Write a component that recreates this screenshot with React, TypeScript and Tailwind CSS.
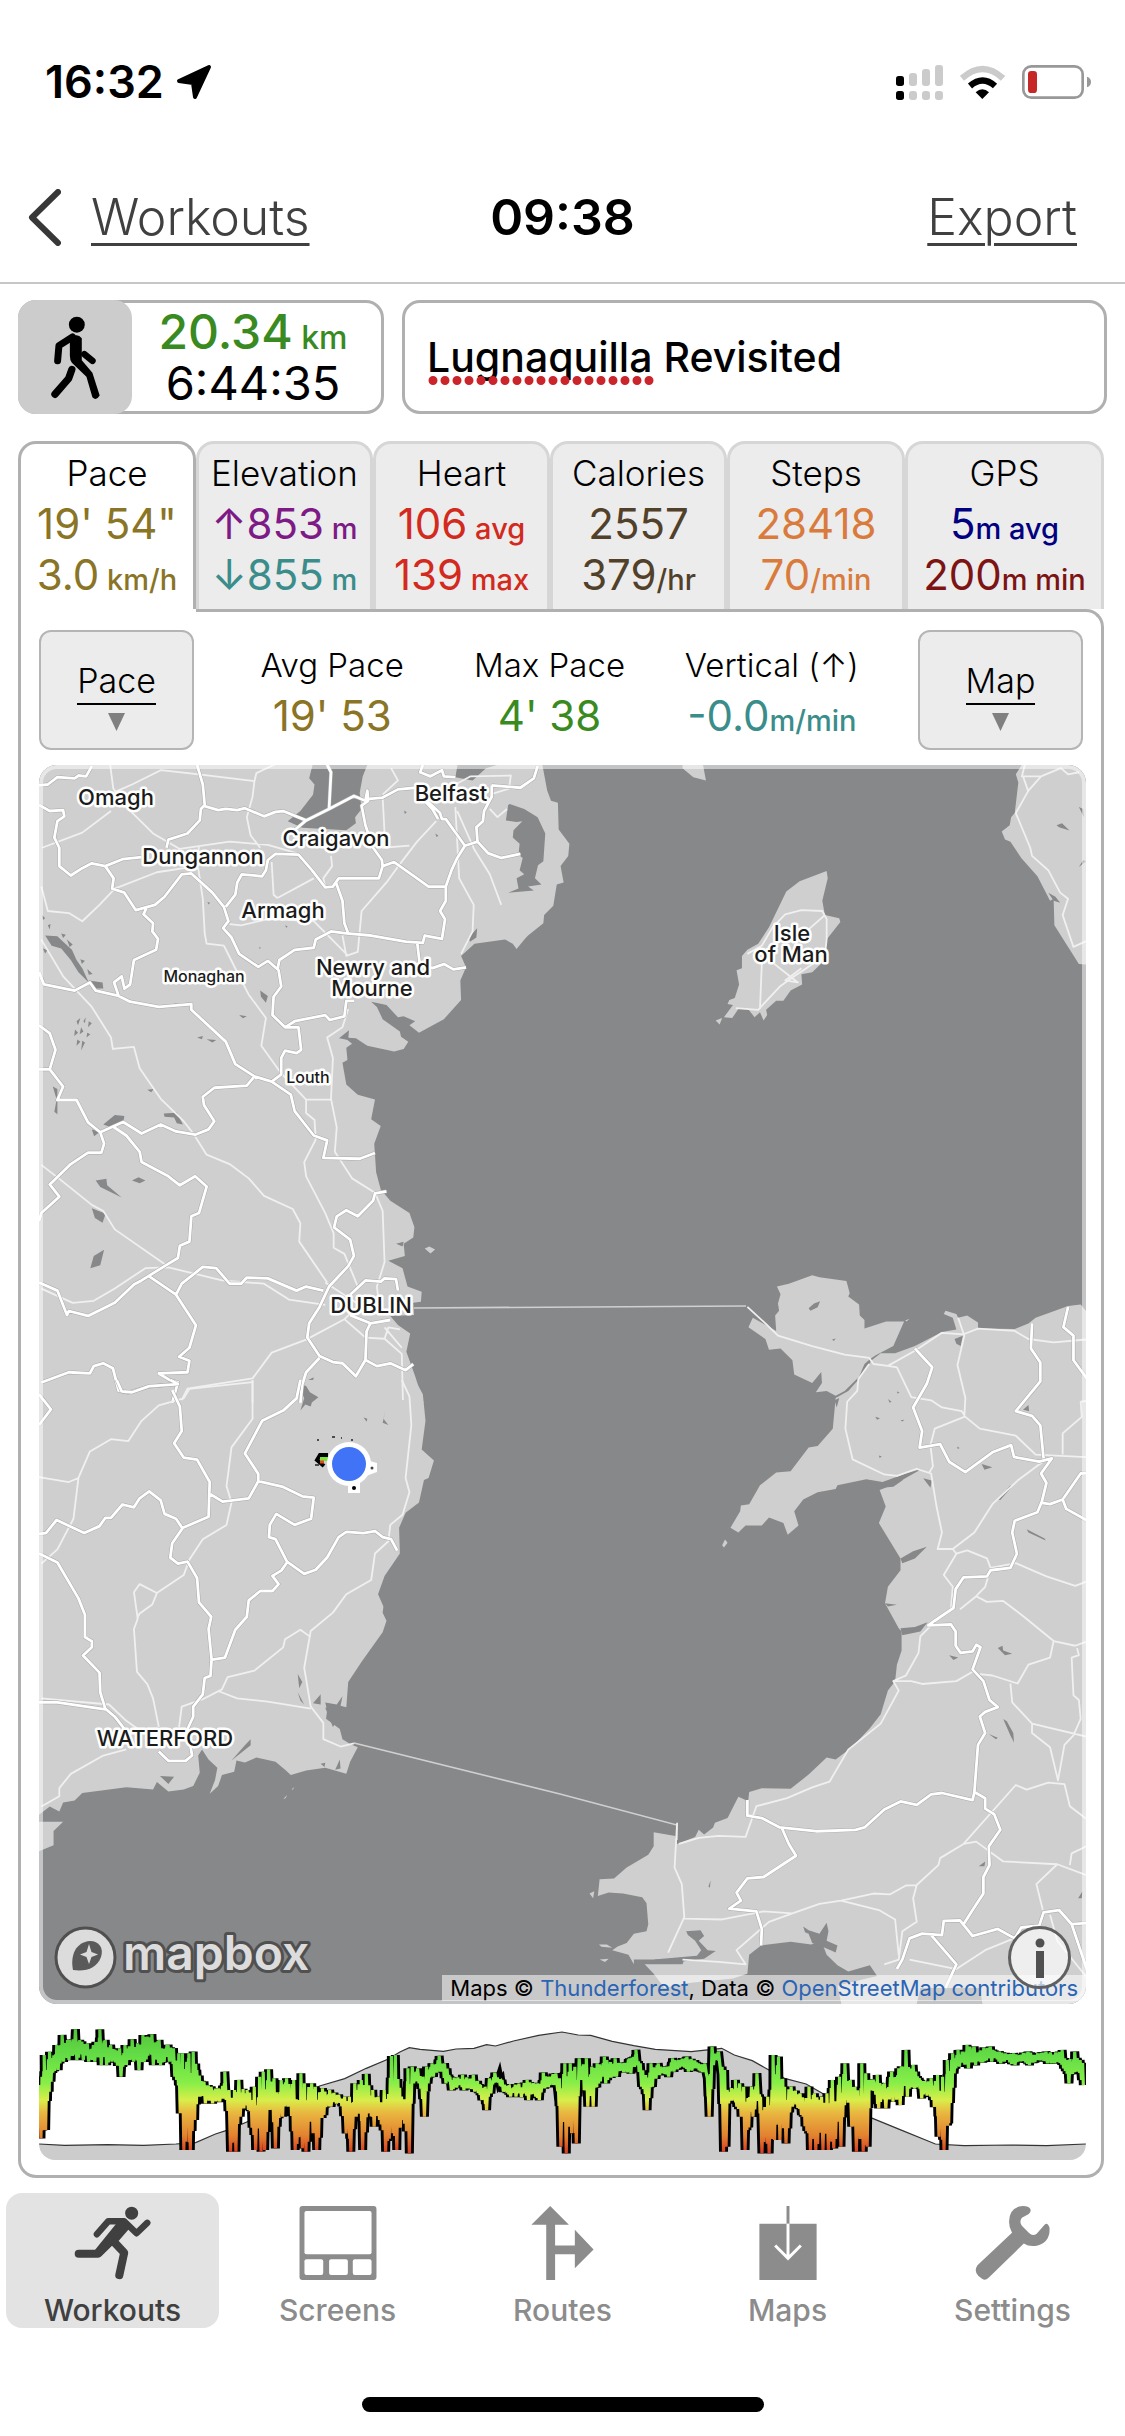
import type { ReactNode } from "react";

/* ---------- Map drawing data: each sheet covers one part of the map ---------- */

type Sheet = {
  place: string;
  land: string[];
  water: string[];
  minor: string[];
  major: string[];
};

const northIreland: Sheet = {
  place: "translate(0 760) scale(0.38265 0.40816)",
  land: [
    "M90 0L1415 0L1430 75L1440 100L1458 105L1460 170L1488 205L1485 235L1465 260L1473 300L1455 305L1446 357L1422 380L1420 400L1380 430L1372 438L1350 463L1340 450L1320 440L1240 450L1205 480L1218 508L1203 540L1205 588L1160 635L1095 668L1070 650L1085 640L1055 628L1040 630L1010 600L970 592L985 605L1000 635L1045 665L1048 678L1067 690L1055 708L1030 714L960 700L930 682L900 680L920 695L905 705L908 735L895 742L905 795L935 820L980 832L970 880L995 897L978 940L983 1010L995 1052L1020 1080L1070 1110L1083 1145L1080 1170L1055 1185L1058 1215L1015 1227L1052 1245L1065 1290L1102 1303L1100 1327L1080 1330L1082 1360L1020 1362L1040 1384L1072 1405L1062 1450L1085 1510L1107 1575L90 1575Z",
    "M1110 1197L1122 1192L1137 1199L1125 1209Z",
  ],
  water: [
    "M820 0L808 45L822 60L818 85L785 125L752 150L790 166L905 172L930 155L928 140L945 120L940 80L948 40L965 0Z",
    "M1198 0L1190 42L1235 50L1270 20L1300 12L1300 0Z",
    "M1328 110L1322 148L1350 152L1365 150L1342 172L1340 190L1358 205L1355 232L1366 240L1358 270L1370 280L1350 290L1355 315L1328 325L1395 320L1380 310L1415 305L1398 290L1406 258L1420 248L1425 180L1405 140L1370 120L1332 108Z",
    "M118 430L150 432L165 445L188 465L200 490L215 510L232 545L205 520L185 490L160 462L135 455Z",
    "M110 380L118 388L112 392ZM125 405L132 402L130 415ZM160 425L172 428L165 436ZM175 440L190 452L182 458ZM112 462L124 466L118 474ZM210 488L222 492L214 500ZM228 512L242 524L232 526Z",
    "M232 540L268 545L270 560L240 560Z",
    "M270 893L300 870L325 872L322 888L290 900Z",
    "M428 866L462 864L478 893L462 890L455 876L430 874Z",
    "M250 1030L278 1026L280 1042L318 1072L262 1046Z",
    "M345 1030L362 1022L380 1030L365 1037Z",
    "M240 1098L276 1112L268 1134L248 1122Z",
    "M236 1245L245 1215L272 1200L262 1238Z",
    "M680 565L700 578L695 595L682 580Z",
    "M1225 435L1247 412L1245 435L1228 445Z",
    "M200 640L210 632L204 650ZM218 640L224 630L222 645ZM232 640L240 645L230 655ZM196 660L204 668L194 676ZM212 655L218 665L208 672ZM228 668L236 672L226 680ZM202 685L210 690L200 700ZM215 688L222 692L212 712Z",
    "M138 800L150 806L150 868L142 862L148 832Z",
    "M240 905L262 910L246 922Z",
    "M782 1530L820 1512L812 1545L832 1568L795 1575Z",
    "M1035 1185L1055 1180L1052 1192Z",
    "M515 680L530 676L528 684ZM540 684L565 686L555 692ZM625 625L645 628L635 633ZM385 808L402 806L395 814ZM445 600L462 596L455 604ZM1056 124L1063 128L1058 132ZM1138 180L1146 186L1140 188ZM542 348L549 350L545 354ZM745 405L752 408L748 411ZM677 458L682 460L679 463Z",
    "M886 682L912 662L910 686Z",
  ],
  minor: [
    "M288 12L296 70L330 115L400 180L470 218",
    "M296 80L345 60L420 25L520 35",
    "M290 125L215 178L110 215",
    "M520 35L665 52L660 90L645 140L655 185L680 215",
    "M665 52L670 32L720 10",
    "M470 218L600 200L700 208L775 228",
    "M520 210L515 260L410 275L300 315L260 355L215 395L180 375L125 370L108 310",
    "M518 265L530 340L535 425L540 450L585 455L620 520L650 575L695 632L683 700L735 768L800 832L865 832",
    "M108 440L165 530L240 605L290 680L295 708L350 703L365 755L420 830L480 885L505 915L540 967L600 990L650 1025L690 1068L765 1100L785 1135L782 1180L855 1280",
    "M108 992L160 1030L240 1090L270 1105L300 1150L430 1235",
    "M108 1295L190 1330L245 1325L300 1295L380 1245L440 1243L580 1275L690 1283L755 1322L850 1335",
    "M600 402L630 405L700 390L820 395L910 480",
    "M725 338L820 290M710 250L715 330L725 338",
    "M895 430L905 480L935 470L945 370L1010 300L1045 255L1090 200L1140 150",
    "M1000 90L1005 180L1000 215L1070 210",
    "M1022 20L1040 50L1000 85M1135 70L1190 60L1230 40L1335 38L1330 70L1280 85",
    "M1190 115L1200 290L1238 355L1235 420L1205 475",
    "M1195 125L1240 220L1280 280L1310 355M1280 120L1300 140L1325 120",
    "M910 610L895 655L855 680L870 730L865 830L880 900L875 960L920 1025L980 1060L1000 1105L1005 1230L985 1290L990 1330",
    "M800 830L800 865L822 882L825 930L795 985L800 1020L850 1110L872 1160L872 1195L900 1210L935 1290",
    "M850 1280L940 1335L900 1370L800 1420L710 1452L660 1515L560 1530L490 1540L475 1568",
    "M900 1370L955 1415L1005 1418L1050 1455L1053 1568M1005 1390L1050 1440M660 1520L660 1575",
    "M1005 1418L1015 1390L1045 1395",
    "M865 235L868 260L845 290L850 310",
  ],
  major: [
    "M102 62L125 60L150 42L195 45L205 38L225 40L240 15",
    "M102 110L130 125L165 123L168 138L150 150L142 190L155 215L155 260L185 283L215 265L240 253L275 260L320 243L370 238",
    "M515 12L530 60L535 110L525 120L522 148L490 180L440 195L435 215",
    "M275 260L297 290L293 315L325 325L355 368L405 355L430 335L475 280L500 278L555 325L585 360L597 395L583 412L605 435L625 475L675 507L700 492L728 515L735 555L715 580L712 625L745 655L770 640L850 625L862 637L900 628L905 590L925 590",
    "M385 358L375 378L400 400L398 420L413 438L408 465L350 490L340 550L325 560L318 530L298 545L310 578L250 565L235 545L195 565L115 550L102 520",
    "M310 578L340 592L415 605L500 598L500 612L590 690L615 745L665 775L710 788L760 820L770 860L820 920L855 932L845 975L940 977L980 963",
    "M535 113L570 123L590 120L620 123L640 118L690 138L720 127L740 125L800 148",
    "M772 170L800 148L860 120L925 88L955 100L960 75L962 100L945 112L955 160L975 215L998 245L1000 260",
    "M855 12L865 30L860 120",
    "M1145 145L1130 120L1100 90L1085 68L1040 72L1000 92L965 95M1105 12L1098 30L1125 40L1155 25L1160 40L1190 42",
    "M1285 62L1360 68L1395 45L1405 15",
    "M1285 62L1285 90L1265 125L1262 150L1245 165L1248 200L1215 210L1165 145L1155 145L1150 130L1110 95",
    "M1248 200L1275 228L1310 240L1360 230M1215 210L1195 240L1180 270L1165 310L1165 345L1150 370L1163 390L1155 438L1110 430L1105 448L1060 445L970 430L905 425L865 420L825 440L820 460L770 465L730 490L725 515",
    "M590 360L615 330L620 300L632 280L685 285L695 270L700 245L720 230L780 232L815 270L850 312L870 310L885 290L990 290L1000 260L1030 250L1090 290L1120 310L1165 310",
    "M878 300L895 345L900 400L910 425M1090 445L1097 500L1130 510L1160 500L1185 513L1218 508",
    "M745 655L780 655L787 710L775 718L745 712L735 730L735 770L710 788",
    "M665 775L645 798L560 803L530 825L533 845L560 885L545 905L510 918L460 910L420 893L370 915L322 887L262 912L272 940L265 962L230 962L185 990L130 1040L155 1070L108 1110L102 1130",
    "M102 650L130 670L145 710L130 758L102 758M130 758L165 800L150 833L200 833L230 888L262 912",
    "M295 898L330 920L365 960L370 985L440 1020L470 1042L510 1020L540 1045L520 1110L500 1118L495 1180L470 1190L465 1220L430 1240L370 1275L350 1285L300 1330L230 1362L180 1350L175 1360L150 1300L102 1280",
    "M390 1265L460 1310L512 1385L495 1440L468 1462L495 1472L490 1500L415 1503L445 1520L465 1525L450 1575",
    "M460 1310L475 1283L530 1242L565 1245L600 1283L630 1283L645 1268L700 1270L775 1300L800 1290L845 1300",
    "M1010 1057L980 1062L975 1080L935 1118L905 1103L880 1118L873 1145L915 1175L925 1215L910 1240L860 1290L835 1340L808 1380L803 1415L835 1460L870 1475L895 1478L930 1510L955 1470L985 1485L1020 1478L1060 1495L1080 1480",
    "M835 1465L800 1500L790 1530L785 1575M955 1470L958 1400L968 1380L1020 1372M968 1380L915 1360",
    "M915 1310L955 1275L995 1278L1005 1270L1035 1272L1040 1300M108 1525L180 1500L235 1503L245 1485L270 1478L295 1490L310 1545L335 1550L390 1535L445 1530",
  ],
};

const southIreland: Sheet = {
  place: "translate(0 1380) scale(0.38265 0.40816)",
  land: [
    "M90 0L1085 0L1105 35L1112 100L1102 170L1134 197L1120 240L1108 245L1095 300L1060 325L1043 362L1045 425L1005 480L988 525L1002 555L1000 570L1010 590L1000 618L945 690L910 740L905 802L890 798L895 775L880 795L850 790L855 810L852 830L888 855L895 880L915 892L935 900L915 935L905 965L850 950L800 957L760 968L745 955L720 935L670 925L640 937L618 932L612 960L580 968L570 995L548 1014L562 980L568 950L545 930L528 905L518 920L522 962L505 995L480 1003L440 1008L410 985L400 1003L330 998L270 1005L215 1012L195 1030L165 1035L155 1057L130 1045L102 1065L90 1065Z",
    "M90 1082L165 1082L140 1105L140 1140L100 1155L90 1155Z",
    "M740 1027L750 1017L747 1024ZM762 1003L768 997L766 1003Z",
  ],
  water: [
    "M780 10L800 15L810 30L832 42L815 55L812 65L798 60L785 75L795 45Z",
    "M950 92L960 95L958 102ZM962 60L967 64ZM1008 72L1002 95L1015 110L1000 105Z",
    "M818 792L838 770L838 795ZM850 803L892 800L885 830L870 850Z",
    "M655 880L655 895L605 932L640 895Z",
    "M418 970L455 972L440 990Z",
    "M876 955L888 930L890 952ZM838 940L850 938L848 948Z",
    "M778 720L790 740L782 755ZM778 765L795 795L785 785Z",
  ],
  minor: [
    "M102 238L180 250L205 240L235 175L290 145L335 150L370 100L415 62L480 45L495 22L660 5",
    "M205 240L192 340L150 415L108 450",
    "M660 0L660 95L605 165L592 260L605 300L592 355L530 390L495 440L480 478L410 522L365 500L350 520L360 585L350 610L358 715L385 745L400 780L415 850",
    "M410 522L398 550L365 572L358 585",
    "M1050 0L1070 40L1075 110L1060 240L1070 275L1052 330L1020 355L1015 395L980 425L970 490L905 525L870 570L812 615L795 705L812 800L845 840L845 880L890 898L925 890",
    "M812 630L785 612L745 635L740 655L665 712L595 728L580 758L530 782L475 800L468 850",
    "M570 762L620 780L700 788L812 805",
    "M108 780L285 795L330 835L365 858M108 1045L155 1020L155 1000L185 965L270 920L330 905",
  ],
  major: [
    "M305 0L318 28L345 30L390 15L440 12L465 10L445 0M450 25L470 65L475 125L455 155L480 190L515 195L548 250L545 335L478 362L450 400L445 435L465 450L490 445L515 485L520 545L552 580L545 610L553 685L550 725L535 730L530 770L505 800L505 825L490 855L502 920L485 933L440 933L415 910",
    "M102 35L133 72L102 110M102 377L120 375L148 343L220 375L260 358L275 338L290 338L320 305L350 312L365 290L390 273L420 295L430 328L460 340L478 365",
    "M102 425L150 447L205 535L222 575L222 630L240 640L240 655L217 675L260 717L262 765L275 805L300 825L325 855M102 790L150 790L275 807",
    "M785 0L775 45L740 75L685 100L640 180L675 230L675 248L650 290L582 298L550 280M675 248L740 262L790 285L820 288L813 340L770 355L722 328L705 355L703 385L720 390L750 445L795 475L825 465L855 435L885 385L905 372L950 375L980 370L1000 385L1022 390L1038 418",
    "M750 447L735 467L712 480L728 500L712 517L680 517L650 540L645 580L615 612L588 680L555 685",
  ],
};

const irishSea: Sheet = {
  place: "translate(560 760) scale(0.36033 0.40816)",
  land: [
    "M740 272L743 290L728 345L735 380L775 388L778 397L740 440L735 490L700 520L670 525L672 550L640 565L620 590L600 590L572 612L575 625L565 638L555 618L540 630L522 610L495 610L478 632L455 630L480 600L465 598L470 588L485 583L497 550L490 515L505 510L505 480L520 465L550 450L580 410L628 322L665 297Z",
    "M432 638L450 632L443 648Z",
    "M340 0L340 20L370 42L405 50L397 12L397 0Z",
    "M1290 0L1265 35L1272 55L1262 130L1252 140L1248 160L1226 175L1235 195L1250 200L1280 240L1325 285L1360 345L1370 340L1372 405L1440 500L1475 502L1475 0Z",
  ],
  water: [
    "M1378 160L1393 155L1414 173L1385 165ZM1440 115L1452 120L1454 140ZM1440 262L1452 245L1460 248Z",
    "M1355 325L1375 335L1388 350L1370 345Z",
  ],
  minor: [
    "M590 410L625 378L670 368L728 370L740 390L740 440L735 480L650 530L610 555L550 612L488 608",
    "M735 380L690 415L650 455M560 500L555 610M595 500L660 545L625 540L670 510",
    "M520 475L560 455L590 410",
    "M1290 12L1282 40L1335 40L1300 75L1265 130L1305 215L1310 235L1355 270L1388 325L1410 340L1395 380L1425 458L1470 440",
    "M1285 40L1300 78M1335 40L1390 20L1410 35L1440 30",
  ],
  major: [],
};

const wales: Sheet = {
  place: "translate(560 1280) scale(0.36033 0.47194)",
  land: [
    "M602 14L635 8L700 -10L720 -6L795 2L804 28L800 35L830 52L832 75L845 85L845 103L905 88L955 88L925 140L875 160L860 168L845 178L830 205L790 235L765 245L740 235L710 238L727 218L725 195L700 218L650 200L645 170L612 145L580 148L570 125L523 100L535 80L570 95L600 108L597 75L608 65L605 50L612 30Z",
    "M958 86L970 82L962 88Z",
    "M765 250L800 235L830 210L865 170L890 155L930 155L985 140L1060 110L1100 105L1090 80L1065 72L1070 65L1100 72L1105 80L1130 75L1160 90L1160 103L1262 104L1300 92L1320 80L1410 55L1445 52L1475 80L1475 1568L1180 1568L1165 1500L1000 1500L980 1568L790 1568L770 1495L880 1475L860 1452L800 1465L770 1452L740 1430L725 1400L697 1408L640 1402L558 1410L525 1430L520 1470L480 1480L350 1490L290 1500L260 1470L235 1450L340 1450L345 1440L205 1440L205 1450L190 1430L145 1420L160 1412L185 1405L205 1385L240 1380L245 1365L240 1320L228 1308L175 1300L135 1298L105 1305L110 1270L150 1268L185 1245L245 1218L260 1200L260 1170L320 1178L325 1195L375 1180L385 1165L400 1175L425 1160L430 1150L465 1140L495 1095L515 1102L520 1120L525 1085L560 1077L640 1078L690 1048L740 1012L765 1016L810 990L860 950L890 920L910 870L930 850L935 815L948 785L948 745L940 738L902 685L910 650L945 615L945 590L885 515L904 480L887 445L930 432L1005 400L960 410L895 428L850 422L770 435L765 443L715 450L675 465L650 490L662 520L632 540L620 515L580 503L560 520L515 520L495 535L473 525L500 490L502 478L525 475L555 435L600 408L640 405L690 355L715 352L757 315Z",
    "M450 562L458 550L465 557L455 567ZM82 1300L95 1295L92 1310ZM108 1408L130 1408L145 1415L115 1413ZM110 1440L135 1438L125 1445Z",
  ],
  water: [
    "M690 60L705 50L722 45L715 58L695 65Z",
    "M890 440L930 425L960 410L950 425L925 438ZM1008 420L1032 425L1028 440Z",
    "M945 590L980 575L1018 565L985 590L950 600ZM945 738L985 735L1020 725L1000 745L950 753ZM902 685L935 688L910 692Z",
    "M1295 528L1345 548L1348 552L1300 535ZM1217 465L1250 435L1252 440L1222 466ZM1170 390L1200 397L1178 402Z",
    "M1215 780L1228 775L1230 785L1255 792L1235 795ZM1080 795L1105 800L1092 805ZM1190 962L1215 970L1210 973ZM1230 930L1240 935L1258 960L1260 980L1250 965Z",
    "M1095 125L1118 118L1112 140L1100 135ZM1230 255L1238 258ZM1285 275L1300 265L1302 278ZM910 252L920 258L915 260ZM762 255L775 250L768 270Z",
    "M875 290L888 293L880 296ZM935 236L942 238L937 241ZM945 297L956 296L950 300ZM885 372L893 374L887 377ZM1102 353L1109 356L1104 358ZM755 126L765 124L760 129Z",
    "M675 1370L690 1378L720 1385L740 1362L745 1380L740 1400L770 1410L765 1425L735 1415L700 1405L690 1385L680 1382Z",
    "M350 1380L390 1378L400 1390L385 1400L410 1420L432 1422L400 1438L300 1448L260 1440L380 1432L392 1420L375 1400L355 1388Z",
    "M1438 1310L1450 1295L1448 1310ZM1162 1242L1180 1232L1178 1242ZM412 1285L418 1272L416 1288Z",
  ],
  minor: [
    "M520 57L570 92L605 118L700 140L790 158L858 165L870 178L910 182L985 150L1060 112L1120 115L1160 103L1262 108L1300 125L1370 132L1475 125",
    "M910 182L935 185L975 248L1030 255L1060 270L1115 278L1125 290L1165 315L1265 330L1320 370L1475 376",
    "M1105 80L1122 118L1103 180L1125 250L1122 290L1040 315L1028 350L1035 395L1025 408M858 178L828 210L825 235L797 258L792 315L812 380L900 412L935 415L990 400L1030 410L1045 480L1060 535L1048 570L1090 570L1150 535L1200 475L1270 425L1340 385",
    "M1475 255L1445 258L1448 290L1395 325L1395 370M1090 570L1100 580L1065 625L1090 650L1085 695M1100 580L1130 573L1185 590L1195 610L1265 600L1350 628L1430 648L1475 635",
    "M1195 610L1180 650L1155 670L1110 698M1155 670L1185 682L1230 680L1290 715L1370 765L1360 800L1300 815L1270 855L1200 838L1165 835M1370 765L1430 775L1475 762M1435 780L1440 795L1420 800L1425 880L1440 890L1445 930L1425 965L1400 985L1382 1060L1360 990L1310 960L1310 940L1255 895L1250 855M1310 940L1475 970",
    "M1045 720L1000 755L995 790L960 838L925 850L975 850L1005 856L1100 850L1145 830M925 850L940 870L890 940L800 995L748 1063L700 1075L630 1098L545 1115L515 1180L440 1178L385 1182L330 1195",
    "M325 1150L318 1245L338 1280L345 1350L300 1425M345 1353L450 1355L565 1338L645 1342L580 1360L490 1420L515 1450L440 1445L340 1440M645 1342L720 1322L780 1315L870 1300L915 1302L960 1283L990 1282M780 1315L885 1335L930 1355L940 1430M990 1282L980 1310L990 1360L950 1380L940 1440L900 1450",
    "M990 1282L1050 1240L1055 1225L1120 1195L1265 1070L1295 1080L1355 1065L1400 1068L1415 1115L1475 1150M1120 1195L1155 1190L1230 1232L1380 1238L1475 1265M1415 1240L1420 1215L1475 1195M1380 1238L1322 1280L1340 1335M970 1440L1100 1460L1180 1420L1260 1395M1360 1345L1380 1400L1475 1490",
  ],
  major: [
    "M985 145L1033 185L1018 220L980 270L1005 320L998 355L1055 348L1080 385L1125 407L1200 365L1252 350L1260 375L1330 385L1365 378L1335 410L1350 430L1337 470L1325 492L1262 510L1255 535L1268 580L1250 610L1195 615L1185 628L1120 630L1098 655L1092 695L1040 722L1022 732L1085 730L1098 745L1098 775L1112 790L1145 787L1155 773L1167 778L1145 825L1175 850L1192 890L1215 905L1180 915L1165 925L1180 960L1160 985L1150 1085L1180 1098L1180 1120L1205 1132L1222 1165L1190 1200L1192 1240L1175 1265L1175 1300L1145 1335L1120 1365",
    "M1150 1085L1145 1102L1060 1087L1030 1090L990 1112L945 1105L900 1122L845 1160L820 1165L710 1168L610 1160L560 1140L520 1135L520 1102",
    "M615 1160L635 1195L655 1220L565 1265L520 1268L490 1298L502 1315L470 1332L545 1338L560 1375L558 1410",
    "M1310 92L1307 145L1333 175L1333 215L1265 278L1310 288L1333 308L1342 378M1410 57L1397 100L1425 118L1425 170L1475 222",
    "M1337 472L1360 475L1395 465L1445 410L1475 408M1395 465L1405 485L1475 515",
    "M935 1460L950 1440L970 1395L1005 1385L1060 1388L1065 1358L1110 1357L1145 1390L1215 1375L1262 1395L1280 1372L1330 1368L1342 1340L1385 1335L1420 1365L1475 1362M1030 1388L1100 1450L1070 1500M1420 1365L1475 1490",
  ],
};

const sheets = [northIreland, southIreland, irishSea, wales];

const places: { x: number; y: number; size: number; text: string }[] = [
  { x: 116, y: 805, size: 22, text: "Omagh" },
  { x: 451, y: 801, size: 22, text: "Belfast" },
  { x: 336, y: 846, size: 22, text: "Craigavon" },
  { x: 203, y: 864, size: 22, text: "Dungannon" },
  { x: 283, y: 918, size: 22, text: "Armagh" },
  { x: 204, y: 982, size: 16, text: "Monaghan" },
  { x: 373, y: 975, size: 22, text: "Newry and" },
  { x: 372, y: 996, size: 22, text: "Mourne" },
  { x: 308, y: 1083, size: 16, text: "Louth" },
  { x: 371, y: 1313, size: 22, text: "DUBLIN" },
  { x: 165, y: 1746, size: 22, text: "WATERFORD" },
  { x: 792, y: 941, size: 22, text: "Isle" },
  { x: 791, y: 962, size: 22, text: "of Man" },
];

function MapDrawing() {
  return (
    <svg viewBox="39 765 1047 1239" className="block h-auto w-full" role="img" aria-label="Map of the Irish Sea">
      <rect x="39" y="765" width="1047" height="1239" fill="#87888a" />
      {sheets.map((s) => (
        <g key={s.place} transform={s.place}>
          <path d={s.land.join("")} fill="#cfcfcf" />
          <path d={s.water.join("")} fill="#87888a" />
        </g>
      ))}
      <path d="M414 1308L746 1306" stroke="#d0d0d0" strokeWidth="1.6" />
      <path d="M354 1743L560 1794L677 1825V1840" stroke="#d0d0d0" strokeWidth="1.6" fill="none" />
      {sheets.map((s) => (
        <g key={s.place} transform={s.place} fill="none" strokeLinejoin="round">
          <path d={s.minor.join("")} stroke="#f0f0f0" strokeWidth="1.8" vectorEffect="non-scaling-stroke" />
          <path d={s.major.join("")} stroke="#a9a9a9" strokeWidth="3.8" vectorEffect="non-scaling-stroke" />
          <path d={s.major.join("")} stroke="#ffffff" strokeWidth="2.8" vectorEffect="non-scaling-stroke" />
        </g>
      ))}

      {places.map((p) => (
        <text
          key={p.text}
          x={p.x}
          y={p.y}
          textAnchor="middle"
          fontSize={p.size}
          fontWeight="500"
          fill="#1b1b1b"
          stroke="#ffffff"
          strokeWidth="5"
          strokeLinejoin="round"
          paintOrder="stroke"
        >
          {p.text}
        </text>
      ))}

      {/* Recorded track and current position */}
      <path d="M328 1455L320 1455L317 1460L324 1466" stroke="#000" strokeWidth="4" fill="none" />
      <path d="M320 1459h10" stroke="#7be040" strokeWidth="4" />
      <path d="M320 1462h4" stroke="#e04a20" strokeWidth="3" />
      <rect x="348" y="1483" width="12" height="10" fill="#fff" />
      <path d="M366 1460L377 1463V1472L366 1476Z" fill="#fff" />
      <circle cx="349" cy="1464" r="22" fill="#fff" />
      <circle cx="349" cy="1464" r="17" fill="#4073f5" />
      <circle cx="354" cy="1488" r="2" fill="#000" />
      <circle cx="372" cy="1468" r="1.5" fill="#444" />
      <path d="M317 1440h2M332 1437h3M341 1438h1M351 1440h2M315 1465h4" stroke="#222" strokeWidth="1.5" />

      {/* Provider logo */}
      <circle cx="85.500" cy="1957.500" r="29.500" fill="#dcdcdc" stroke="#505050" strokeWidth="3" />
      <path d="M73 1970C70 1955 76 1942 90 1941C99 1941 104 1948 101 1957C97 1968 86 1972 73 1970Z" fill="#5a5a5a" />
      <path d="M89 1944L91.500 1952L98 1954.500L91.500 1957L89 1964L86.500 1957L80 1954.500L86.500 1952Z" fill="#dcdcdc" />
      <text
        x="123"
        y="1970"
        fontSize="48"
        fontWeight="600"
        fill="#dcdcdc"
        stroke="#505050"
        strokeWidth="6"
        strokeLinejoin="round"
        paintOrder="stroke"
      >
        mapbox
      </text>
    </svg>
  );
}

/* ---------- Pace chart ---------- */

/* x, highest y, lowest y */
const envelope: [number, number, number][] = [
  [112, 255, 415], [125, 165, 390], [140, 155, 245], [160, 135, 210], [175, 105, 185], [190, 120, 180], [212, 88, 180],
  [230, 125, 180], [245, 130, 185], [262, 135, 185], [280, 88, 195], [295, 120, 195], [310, 135, 185], [335, 145, 230],
  [350, 135, 195], [370, 118, 185], [385, 130, 210], [400, 105, 185], [425, 103, 195], [445, 120, 195], [470, 135, 185],
  [485, 145, 230], [500, 160, 340], [510, 160, 450], [528, 160, 450], [540, 155, 360], [550, 210, 290], [570, 245, 310],
  [590, 260, 310], [610, 265, 305], [628, 215, 300], [640, 270, 455], [655, 270, 455], [667, 240, 350], [690, 270, 330],
  [710, 260, 450], [725, 230, 455], [735, 215, 450], [750, 208, 330], [765, 235, 445], [785, 240, 350], [800, 235, 320],
  [820, 240, 450], [840, 220, 445], [850, 250, 455], [870, 250, 400], [880, 260, 450], [900, 265, 345], [920, 270, 320],
  [945, 285, 308], [962, 290, 400], [975, 290, 455], [990, 250, 350], [1008, 240, 450], [1022, 222, 340], [1040, 270, 380],
  [1055, 290, 360], [1072, 270, 455], [1092, 168, 400], [1103, 165, 450], [1120, 290, 360], [1138, 205, 460], [1150, 200, 250],
  [1165, 205, 250], [1180, 230, 350], [1190, 200, 250], [1205, 190, 230], [1225, 168, 215], [1240, 190, 250], [1255, 230, 270],
  [1290, 225, 270], [1320, 225, 275], [1340, 255, 300], [1353, 260, 330], [1365, 235, 280], [1380, 218, 245], [1400, 240, 275],
  [1420, 255, 290], [1470, 240, 300], [1500, 250, 300], [1515, 218, 265], [1550, 220, 260], [1560, 235, 440], [1575, 190, 460],
  [1590, 190, 400], [1603, 200, 430], [1615, 175, 240], [1635, 175, 320], [1650, 200, 320], [1665, 190, 250], [1685, 170, 250],
  [1715, 175, 230], [1755, 175, 220], [1773, 150, 195], [1785, 190, 260], [1800, 225, 330], [1815, 190, 260], [1835, 190, 225],
  [1860, 200, 230], [1875, 175, 215], [1915, 170, 215], [1965, 190, 220], [1973, 230, 350], [1985, 140, 195], [2003, 155, 195],
  [2013, 200, 455], [2020, 210, 440], [2027, 270, 310], [2050, 240, 320], [2062, 250, 350], [2073, 260, 450], [2095, 260, 350],
  [2110, 220, 300], [2120, 290, 460], [2140, 290, 460], [2155, 165, 420], [2170, 170, 420], [2187, 260, 430], [2205, 260, 320],
  [2230, 280, 345], [2255, 260, 450], [2270, 280, 450], [2290, 290, 450], [2305, 280, 450], [2320, 240, 445], [2340, 230, 440],
  [2355, 190, 300], [2370, 240, 380], [2383, 260, 455], [2402, 190, 455], [2413, 220, 440], [2422, 240, 260], [2445, 225, 325],
  [2465, 250, 325], [2485, 215, 305], [2505, 205, 315], [2525, 150, 290], [2545, 195, 265], [2565, 240, 295], [2595, 235, 300],
  [2613, 225, 410], [2627, 230, 450], [2640, 180, 370], [2655, 160, 220], [2670, 150, 200], [2695, 135, 205], [2715, 140, 195],
  [2760, 140, 185], [2785, 155, 190], [2825, 160, 195], [2865, 155, 195], [2915, 155, 190], [2960, 150, 205], [2975, 180, 250],
  [2995, 155, 215], [3010, 180, 240], [3022, 190, 320],
];

function tracePath() {
  const points: string[] = [];
  let seed = 7;
  const random = () => {
    seed = (seed * 16807) % 2147483647;
    return seed / 2147483647;
  };
  for (let i = 0; i < envelope.length - 1; i++) {
    const [x0, a0, b0] = envelope[i];
    const [x1, a1, b1] = envelope[i + 1];
    points.push(`${x0 - 2} ${a0}`, `${x0 + 2} ${b0}`);
    for (let x = x0 + 5; x < x1 - 2; x += 5) {
      const t = (x - x0) / (x1 - x0);
      const top = a0 + (a1 - a0) * t;
      const height = b0 + (b1 - b0) * t - top;
      points.push(`${x} ${Math.round(top + height * (0.05 + 0.3 * random()))}`);
      points.push(`${x + 2} ${Math.round(top + height * (0.6 + 0.35 * random()))}`);
    }
  }
  return "M" + points.join("L");
}

const trace = tracePath();

const hill =
  "M109 432L180 436L300 434L400 436L490 432L545 428L600 402L640 388L700 360L790 310L890 258L960 236L1020 205L1080 178L1115 155L1140 143L1170 148L1235 154L1270 147L1320 145L1355 134L1380 138L1430 123L1500 106L1565 96L1610 105L1645 106L1705 124L1765 137L1825 148L1925 155L2010 145L2045 165L2095 182L2145 212L2185 235L2245 252L2290 280L2365 320L2425 353L2505 388L2605 432L2685 437L2815 435L2915 437L3024 432";

function PaceChart() {
  return (
    <svg
      viewBox="39 2020 1047 140"
      className="block h-auto w-full rounded-b-2xl"
      role="img"
      aria-label="Pace and elevation over the workout"
    >
      <defs>
        <linearGradient id="pace" gradientUnits="userSpaceOnUse" x1="0" y1="90" x2="0" y2="465">
          <stop offset="0" stopColor="#55c43c" />
          <stop offset="0.2" stopColor="#63dc45" />
          <stop offset="0.42" stopColor="#86ee48" />
          <stop offset="0.56" stopColor="#d9ee4a" />
          <stop offset="0.66" stopColor="#e9b840" />
          <stop offset="0.85" stopColor="#e2802f" />
          <stop offset="1" stopColor="#d8331f" />
        </linearGradient>
      </defs>
      <g transform="translate(0 2000) scale(0.35907 0.33333)">
        <path d={hill + "V480H109Z"} fill="#cccccc" />
        <path d={hill} fill="none" stroke="#333333" strokeWidth="1.2" vectorEffect="non-scaling-stroke" />
        <path d={trace} fill="none" stroke="#000000" strokeWidth="9" vectorEffect="non-scaling-stroke" />
        <path d={trace} fill="none" stroke="url(#pace)" strokeWidth="9" />
      </g>
    </svg>
  );
}

/* ---------- Icons ---------- */

function LocationArrow() {
  return (
    <svg viewBox="0 0 36 36" className="size-9" aria-hidden="true">
      <path d="M33 3L19 33L17 19L3 17Z" fill="#000" stroke="#000" strokeWidth="4" strokeLinejoin="round" />
    </svg>
  );
}

function SignalIcon() {
  return (
    <svg viewBox="45 42 141 105" className="h-[35px] w-[47px]" aria-label="Signal">
      <rect x="45" y="75" width="24" height="30" rx="8" />
      <rect x="45" y="120" width="24" height="27" rx="8" />
      <g fill="#cbcbcb">
        <rect x="84" y="66" width="24" height="39" rx="9" />
        <rect x="123" y="54" width="24" height="51" rx="9" />
        <rect x="162" y="42" width="24" height="63" rx="9" />
        <rect x="84" y="120" width="24" height="27" rx="9" />
        <rect x="123" y="120" width="24" height="27" rx="9" />
        <rect x="162" y="120" width="24" height="27" rx="9" />
      </g>
    </svg>
  );
}

function WifiIcon() {
  return (
    <svg viewBox="242 42 135 105" className="h-[35px] w-[45px]" aria-label="Wi-Fi" fill="none">
      <path d="M248 82Q310 26 371 82" stroke="#cbcbcb" strokeWidth="19" />
      <path d="M272 105Q310 72 347 105" stroke="#000" strokeWidth="19" />
      <path d="M289 124Q309 105 329 124L309 144Z" fill="#000" />
    </svg>
  );
}

function BatteryIcon() {
  return (
    <svg viewBox="426 45 207 102" className="h-[34px] w-[69px]" aria-label="Battery low">
      <rect x="430" y="49" width="178" height="94" rx="24" fill="none" stroke="#989898" strokeWidth="8" />
      <rect x="444" y="63" width="27" height="66" rx="10" fill="#c62828" />
      <path d="M621 80Q633 84 633 96Q633 108 621 112Z" fill="#989898" />
    </svg>
  );
}

function WalkIcon() {
  return (
    <svg
      viewBox="115 70 160 260"
      className="h-[87px] w-[53px]"
      aria-hidden="true"
      fill="none"
      stroke="#000"
      strokeLinecap="round"
      strokeLinejoin="round"
    >
      <circle cx="199" cy="101" r="24" fill="#000" stroke="none" />
      <path d="M178 145Q198 122 214 142V208L246 246L268 315Q258 332 246 320L228 258L184 216Q178 208 178 195Z" fill="#000" stroke="none" />
      <path d="M186 138L145 164L141 210" strokeWidth="21" />
      <path d="M222 190L246 210" strokeWidth="20" />
      <path d="M184 236L174 264L133 311" strokeWidth="22" />
    </svg>
  );
}

function RunIcon() {
  return (
    <svg
      viewBox="38 28 236 228"
      className="h-[76px] w-[79px]"
      aria-hidden="true"
      fill="none"
      stroke="currentColor"
      strokeLinecap="round"
      strokeLinejoin="round"
    >
      <circle cx="215" cy="50" r="20" fill="currentColor" stroke="none" />
      <path d="M108 115L143 75H192L230 112L263 80" strokeWidth="20" />
      <path d="M190 68L206 100L176 134L150 152L116 186L100 166L166 84Z" fill="currentColor" stroke="none" />
      <path d="M52 175H112L160 128" strokeWidth="25" />
      <path d="M162 140L192 172L177 241" strokeWidth="25" />
    </svg>
  );
}

function ScreensIcon() {
  return (
    <svg viewBox="0 0 78 75" className="h-[75px] w-[78px]" aria-hidden="true">
      <rect width="78" height="75" rx="3" fill="currentColor" />
      <g fill="#fff">
        <rect x="5" y="5" width="68" height="44" rx="2" />
        <rect x="5" y="54" width="19" height="16" rx="2" />
        <rect x="30" y="54" width="19" height="16" rx="2" />
        <rect x="54" y="54" width="19" height="16" rx="2" />
      </g>
    </svg>
  );
}

function RoutesIcon() {
  return (
    <svg viewBox="0 0 63 75" className="h-[75px] w-[63px]" aria-hidden="true">
      <path d="M19 0L38 19H24V40H44V24L63 44L44 63V49H24V75H15V19H0Z" fill="currentColor" />
    </svg>
  );
}

function MapsIcon() {
  return (
    <svg viewBox="0 0 58 75" className="h-[75px] w-[58px]" aria-hidden="true" fill="none">
      <rect y="18" width="58" height="57" fill="currentColor" />
      <path d="M29 0V18" stroke="currentColor" strokeWidth="3" />
      <path d="M29 18V52M16 40L29 53L42 40" stroke="#fff" strokeWidth="3" />
    </svg>
  );
}

function SettingsIcon() {
  return (
    <svg viewBox="0 0 75 75" className="size-[75px]" aria-hidden="true">
      <path
        d="M56 4Q55 0 48 0Q34 1 34 16Q34 22 37 27L2 60Q-2 66 3 71L7 74Q10 76 13 73L49 38Q55 42 63 40Q76 36 75 22Q73 16 70 19L62 28Q58 31 54 27L47 20Q44 16 47 12L54 8Q56 6 56 4Z"
        fill="currentColor"
      />
    </svg>
  );
}

/* ---------- Parts ---------- */

type Metric = { name: string; top: ReactNode; topColor: string; bottom: ReactNode; bottomColor: string };

const unit = (text: string) => <span className="text-[29px] leading-none font-medium whitespace-pre">{text}</span>;

const metrics: Metric[] = [
  { name: "Pace", top: "19' 54\"", topColor: "text-[#8a7425]", bottom: <>3.0{unit(" km/h")}</>, bottomColor: "text-[#8a7425]" },
  { name: "Elevation", top: <>↑853{unit(" m")}</>, topColor: "text-[#7d1a86]", bottom: <>↓855{unit(" m")}</>, bottomColor: "text-[#3a8d8a]" },
  { name: "Heart", top: <>106{unit(" avg")}</>, topColor: "text-[#d32a20]", bottom: <>139{unit(" max")}</>, bottomColor: "text-[#d32a20]" },
  { name: "Calories", top: "2557", topColor: "text-[#51402a]", bottom: <>379{unit("/hr")}</>, bottomColor: "text-[#51402a]" },
  { name: "Steps", top: "28418", topColor: "text-[#d97b3c]", bottom: <>70{unit("/min")}</>, bottomColor: "text-[#d97b3c]" },
  { name: "GPS", top: <>5{unit("m avg")}</>, topColor: "text-[#000080]", bottom: <>200{unit("m min")}</>, bottomColor: "text-[#7d1414]" },
];

function MetricTab({ metric, active }: { metric: Metric; active: boolean }) {
  return (
    <button
      type="button"
      role="tab"
      aria-selected={active}
      className={
        "flex h-[168px] min-w-0 flex-col items-center rounded-t-[18px] border-3 border-b-0 pt-1 whitespace-nowrap " +
        (active ? "border-[#b0b0b0] bg-white" : "border-[#d6d6d6] bg-[#ececec]")
      }
    >
      <span className="text-[35px] leading-[50px] font-light">{metric.name}</span>
      <span className={"text-[42px] leading-[51px] " + metric.topColor}>{metric.top}</span>
      <span className={"text-[42px] leading-[51px] " + metric.bottomColor}>{metric.bottom}</span>
    </button>
  );
}

function Picker({ id, label, options }: { id: string; label: string; options: string[] }) {
  return (
    <div className="flex h-[120px] flex-col items-center rounded-xl border-2 border-[#b5b5b5] bg-[#ececec] pt-[27px]">
      <label htmlFor={id} className="sr-only">
        {label}
      </label>
      <select
        id={id}
        className="h-[46px] appearance-none border-b-2 border-black bg-transparent text-[34px] leading-[44px] font-light [field-sizing:content]"
      >
        {options.map((o) => (
          <option key={o}>{o}</option>
        ))}
      </select>
      <svg viewBox="0 0 17 18" className="mt-2 h-[18px] w-[17px]" aria-hidden="true">
        <path d="M0 0H17L8.500 18Z" fill="#808080" />
      </svg>
    </div>
  );
}

function Stat({ name, color, children }: { name: string; color: string; children: ReactNode }) {
  return (
    <div className="flex min-w-0 flex-col items-center whitespace-nowrap">
      <dt className="text-[33px] leading-[50px] font-light">{name}</dt>
      <dd className={"text-[42px] leading-[51px] " + color}>{children}</dd>
    </div>
  );
}

const destinations: { name: string; icon: ReactNode }[] = [
  { name: "Workouts", icon: <RunIcon /> },
  { name: "Screens", icon: <ScreensIcon /> },
  { name: "Routes", icon: <RoutesIcon /> },
  { name: "Maps", icon: <MapsIcon /> },
  { name: "Settings", icon: <SettingsIcon /> },
];

export default function App() {
  return (
    <div className="min-h-screen bg-white font-[Inter,sans-serif] text-black">
      <div className="flex h-[164px] items-center justify-between pr-[34px] pl-[45px]">
        <div className="flex items-center gap-3">
          <span className="text-[45px] font-semibold">16:32</span>
          <LocationArrow />
        </div>
        <div className="flex items-center gap-[17px]">
          <SignalIcon />
          <WifiIcon />
          <BatteryIcon />
        </div>
      </div>

      <header className="grid h-[120px] grid-cols-3 items-center border-b-2 border-[#c6c6c6] px-7 pb-3">
        <a href="#workouts" className="flex items-center gap-[30px] text-[50px] text-[#404040]">
          <svg viewBox="0 0 33 57" className="h-[57px] w-[33px]" aria-hidden="true">
            <path d="M30 3L4 28.500L30 54" fill="none" stroke="#383838" strokeWidth="6" strokeLinecap="round" strokeLinejoin="round" />
          </svg>
          <span className="font-light underline decoration-3 underline-offset-8">Workouts</span>
        </a>
        <h1 className="text-center text-[50px] font-semibold">09:38</h1>
        <a href="#export" className="pr-5 text-right text-[50px] font-light text-[#404040] underline decoration-3 underline-offset-8">
          Export
        </a>
      </header>

      <div className="mt-4 flex gap-[18px] px-[18px]">
        <div className="flex h-[114px] w-[366px] rounded-[18px] border-3 border-[#b0b0b0]">
          <button
            type="button"
            aria-label="Activity: walking"
            className="-m-[3px] flex w-[114px] items-center justify-center rounded-[18px] bg-[#cccccc]"
          >
            <WalkIcon />
          </button>
          <div className="flex flex-1 flex-col items-center justify-center pr-1">
            <p className="text-[48px] leading-[51px] font-medium text-[#3a8a22]">
              20.34<span className="text-[32px] leading-none whitespace-pre"> km</span>
            </p>
            <p className="text-[47px] leading-[51px]">6:44:35</p>
          </div>
        </div>
        <div className="relative flex-1">
          <input
            aria-label="Workout name"
            defaultValue="Lugnaquilla Revisited"
            className="h-[114px] w-full rounded-[18px] border-3 border-[#b0b0b0] px-[22px] text-[41px] font-medium"
          />
          <svg viewBox="0 0 226 9" className="pointer-events-none absolute top-[76px] left-[26px] h-[9px] w-[226px]" aria-hidden="true">
            <path d="M5 4.500H222" stroke="#c9252b" strokeWidth="9" strokeLinecap="round" strokeDasharray="0 12" />
          </svg>
        </div>
      </div>

      <main className="mt-[27px] mr-[21px] ml-[18px]">
        <div role="tablist" className="grid grid-cols-[178fr_177fr_177fr_177fr_178fr_199fr]">
          {metrics.map((m, i) => (
            <MetricTab key={m.name} metric={m} active={i === 0} />
          ))}
        </div>
        <div className="grid h-[18px] grid-cols-[178fr_908fr]">
          <div className="border-l-3 border-[#b0b0b0]" />
          <div className="rounded-tr-[18px] border-t-3 border-r-3 border-[#b0b0b0]" />
        </div>

        <section className="rounded-b-[18px] border-3 border-t-0 border-[#b0b0b0] pt-[3px] pr-[15px] pb-[15px] pl-[18px]">
          <div className="grid grid-cols-[155px_1fr_165px] pr-[3px]">
            <Picker id="measure" label="Measure" options={["Pace", "Heart", "Steps"]} />
            <dl className="grid grid-cols-[216fr_218fr_226fr] content-center pr-[33px] pl-[30px]">
              <Stat name="Avg Pace" color="text-[#8a7425]">19' 53</Stat>
              <Stat name="Max Pace" color="text-[#3a8a22]">4' 38</Stat>
              <Stat name="Vertical (↑)" color="text-[#3a8d8a]">
                -0.0{unit("m/min")}
              </Stat>
            </dl>
            <Picker id="view" label="View" options={["Map", "Chart"]} />
          </div>

          <div className="relative mt-[15px] overflow-hidden rounded-[18px]">
            <MapDrawing />
            <div className="pointer-events-none absolute inset-0 rounded-[18px] border-[4px] border-white/50" />
            <p className="absolute right-0 bottom-[3px] bg-white/55 px-2 text-[22px] leading-[26px] whitespace-nowrap">
              Maps ©{" "}
              <a href="#thunderforest" className="text-[#2a65b5]">
                Thunderforest
              </a>
              , Data ©{" "}
              <a href="#openstreetmap" className="text-[#2a65b5]">
                OpenStreetMap contributors
              </a>
            </p>
            <button
              type="button"
              aria-label="Map information"
              className="absolute right-[15px] bottom-[15px] flex size-[63px] items-center justify-center rounded-full border-3 border-[#606060] bg-white/65"
            >
              <svg viewBox="0 0 12 40" className="h-[40px] w-[12px]" aria-hidden="true">
                <circle cx="6" cy="5" r="4.500" fill="#505050" />
                <rect x="2" y="13" width="8" height="27" fill="#505050" />
              </svg>
            </button>
          </div>

          <div className="mt-4">
            <PaceChart />
          </div>
        </section>
      </main>

      <nav className="mt-[15px] grid grid-cols-5">
        {destinations.map((d, i) => (
          <a
            key={d.name}
            href={"#" + d.name.toLowerCase()}
            className={
              "mx-1.5 flex h-[135px] flex-col items-center rounded-2xl pt-[13px] text-[30px] leading-[36px] font-medium " +
              (i === 0 ? "bg-[#e3e3e3] text-[#404040]" : "text-[#8c8c8c]")
            }
          >
            {d.icon}
            <span className="mt-3">{d.name}</span>
          </a>
        ))}
      </nav>
      <div className="mx-auto mt-[69px] h-[15px] w-[402px] rounded-full bg-black" />
    </div>
  );
}
